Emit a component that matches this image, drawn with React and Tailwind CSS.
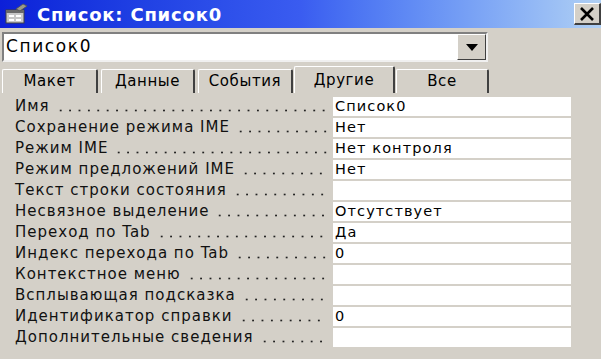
import React from "react";

const props = [
  { name: "Имя", value: "Список0" },
  { name: "Сохранение режима IME", value: "Нет" },
  { name: "Режим IME", value: "Нет контроля" },
  { name: "Режим предложений IME", value: "Нет" },
  { name: "Текст строки состояния", value: "" },
  { name: "Несвязное выделение", value: "Отсутствует" },
  { name: "Переход по Tab", value: "Да" },
  { name: "Индекс перехода по Tab", value: "0" },
  { name: "Контекстное меню", value: "" },
  { name: "Всплывающая подсказка", value: "" },
  { name: "Идентификатор справки", value: "0" },
  { name: "Дополнительные сведения", value: "" },
];

const tabs = [
  { label: "Макет", w: "w-[96px]" },
  { label: "Данные", w: "w-[94px]" },
  { label: "События", w: "w-[95px]" },
  { label: "Другие", w: "w-[101px]", active: true },
  { label: "Все", w: "w-[93px]" },
];

const FormIcon = () => (
  <svg width="24" height="22" viewBox="0 0 24 22">
    <rect x="2" y="7" width="18" height="13" fill="#c8c8c8" stroke="#404040" />
    <rect x="2" y="7" width="18" height="3" fill="#6a6a6a" />
    <rect x="5" y="12" width="5" height="2" fill="#fff" />
    <rect x="12" y="12" width="5" height="2" fill="#fff" />
    <rect x="5" y="16" width="5" height="2" fill="#fff" />
    <rect x="12" y="16" width="5" height="2" fill="#fff" />
    <path d="M12 6 L19 1 L23 3 L16 8 Z" fill="#9a9a8a" stroke="#505050" strokeWidth="0.8" />
  </svg>
);

export default function App() {
  return (
    <div
      className="w-[601px] h-[359px] bg-[#d4d0c8] overflow-hidden text-black"
      style={{ fontFamily: '"DejaVu Sans", Verdana, sans-serif' }}
    >
      {/* title bar */}
      <div className="h-[28px] flex items-center bg-gradient-to-r from-[#0c1fd8] via-[#3a5cf0] to-[#b0d0f4] pl-[4px]">
        <FormIcon />
        <div className="ml-[9px] text-white font-bold text-[18px] tracking-[0.8px] whitespace-nowrap">
          Список: Список0
        </div>
        <div className="ml-auto w-[27px] h-[22px] bg-[#d4d0c8] border-t border-l border-white border-b-2 border-r-2 border-b-[#404040] border-r-[#404040] flex items-center justify-center">
          <svg width="16" height="14" viewBox="0 0 16 14">
            <path d="M2 1 L14 13 M14 1 L2 13" stroke="#000" strokeWidth="2.6" />
          </svg>
        </div>
      </div>

      {/* combo box */}
      <div className="mt-[4px] ml-[2px] w-[486px] h-[30px] bg-white border-2 border-t-[#808080] border-l-[#808080] border-b-[#f0f0f0] border-r-[#f0f0f0] flex items-center">
        <div className="flex-1 pl-[2px] text-[17px] tracking-[1.6px]">Список0</div>
        <div className="w-[29px] h-[26px] bg-[#d4d0c8] border border-t-white border-l-white border-b-[#404040] border-r-[#404040] flex items-center justify-center">
          <svg width="12" height="7" viewBox="0 0 12 7">
            <path d="M0 0 H12 L6 7 Z" fill="#000" />
          </svg>
        </div>
      </div>

      {/* tabs */}
      <div className="mt-[4px] ml-[2px] flex items-end h-[27px] gap-[3px]">
        {tabs.map((t) => (
          <div
            key={t.label}
            className={`${t.w} ${
              t.active ? "h-[27px] -mx-[2px]" : "h-[24px]"
            } border-t border-l border-white border-r-2 border-r-[#404040] rounded-t-[2px] flex items-center justify-center text-[15px] tracking-[0.6px] bg-[#d4d0c8]`}
          >
            {t.label}
          </div>
        ))}
      </div>

      {/* property rows */}
      <div className="pt-[4px] flex flex-col gap-[2px]">
        {props.map((p) => (
          <div key={p.name} className="flex items-center h-[19px]">
            <div className="w-[318px] ml-[15px] pr-[6px] flex items-end h-[19px] whitespace-nowrap text-[15px] tracking-[1px] leading-[19px] text-[#111]">
              <span>{p.name}</span>
              <span className="flex-1 ml-[6px] mb-[4px] h-[3px] bg-[radial-gradient(circle,#222_0.9px,transparent_1.2px)] bg-[length:9.4px_3px]" />
            </div>
            <div className="w-[238px] h-[19px] bg-white pl-[2px] text-[14.5px] tracking-[1.1px] leading-[19px]">
              {p.value}
            </div>
          </div>
        ))}
      </div>
    </div>
  );
}
